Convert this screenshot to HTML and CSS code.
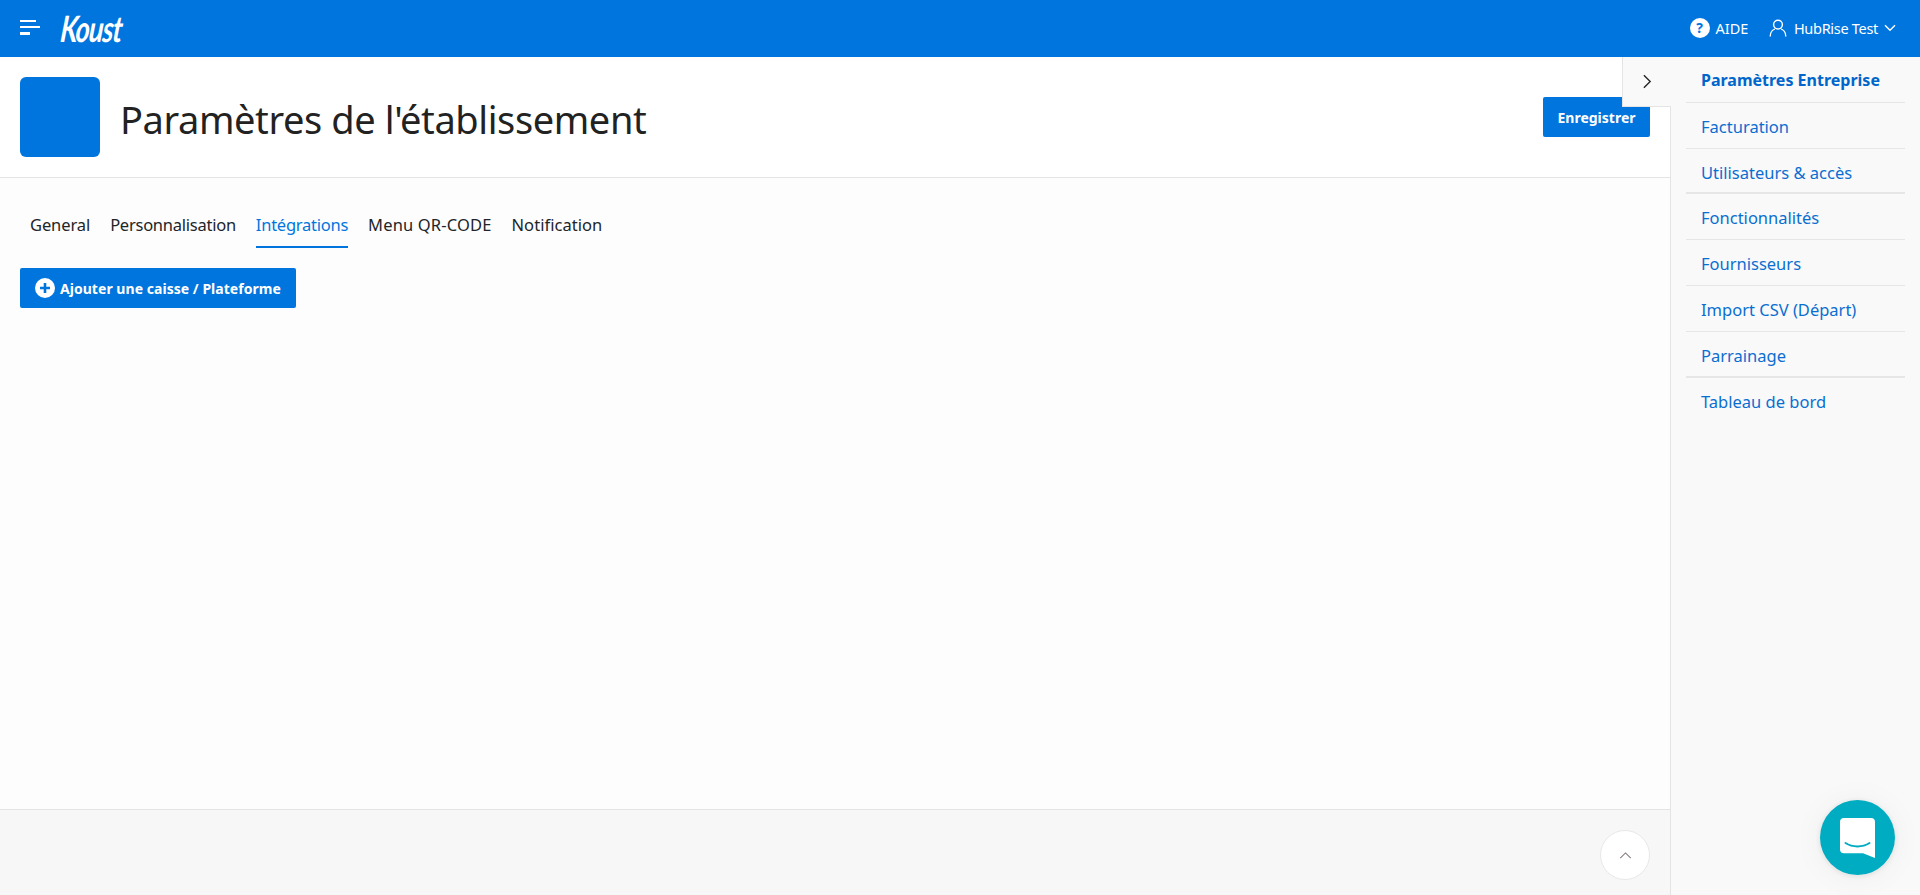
FILE: index.html
```html
<!DOCTYPE html>
<html lang="fr">
<head>
<meta charset="utf-8">
<title>Koust</title>
<link rel="stylesheet" href="styles.css">
</head>
<body>
<header class="topbar">
  <div class="topbar-left">
    <button class="burger" aria-label="Menu"><span class="b1"></span><span class="b2"></span><span class="b3"></span></button>
    <span class="logo">Koust</span>
  </div>
  <div class="topbar-right">
    <a class="help"><span class="help-icon">?</span>AIDE</a>
    <a class="user">
      <svg class="user-icon" viewBox="0 0 18 18" width="18" height="18" fill="none" stroke="#fff" stroke-width="1.4"><circle cx="9" cy="5.600" r="4.400"/><path d="M1.200 17.400c0-4 2.600-6.600 4.600-7.200M16.800 17.400c0-4-2.600-6.600-4.600-7.200"/></svg>
      <span class="user-name">HubRise Test</span>
      <svg class="chev" viewBox="0 0 12 8" width="12" height="8" fill="none" stroke="#fff" stroke-width="1.400"><path d="M1 1.200l5 5 5-5"/></svg>
    </a>
  </div>
</header>
<div class="page">
  <main class="main">
    <section class="head">
      <div class="head-left">
        <div class="avatar"></div>
        <h1>Paramètres de l'établissement</h1>
      </div>
      <button class="btn btn-save">Enregistrer</button>
    </section>
    <section class="content">
      <nav class="tabs">
        <a class="tab tab-general">General</a>
        <a class="tab">Personnalisation</a>
        <a class="tab active">Intégrations</a>
        <a class="tab tab-menu">Menu QR-CODE</a>
        <a class="tab tab-notif">Notification</a>
      </nav>
      <button class="btn btn-add">
        <svg viewBox="0 0 20 20" width="20" height="20"><circle cx="10" cy="10" r="10" fill="#fff"/><path d="M10 5v10M5 10h10" stroke="#0075de" stroke-width="2.600"/></svg>
        Ajouter une caisse / Plateforme
      </button>
    </section>
    <footer class="foot">
      <button class="to-top" aria-label="Haut">
        <svg viewBox="0 0 14 8" width="13" height="7" fill="none" stroke="#857a7a" stroke-width="1.200"><path d="M1 7l6-6 6 6"/></svg>
      </button>
    </footer>
    <button class="toggle" aria-label="Replier">
      <svg viewBox="0 0 10 16" width="9" height="15" fill="none" stroke="#222" stroke-width="1.500"><path d="M1 1l7 7-7 7"/></svg>
    </button>
  </main>
  <aside class="side">
    <a class="side-item strong">Paramètres Entreprise</a>
    <a class="side-item">Facturation</a>
    <a class="side-item thick">Utilisateurs &amp; accès</a>
    <a class="side-item">Fonctionnalités</a>
    <a class="side-item">Fournisseurs</a>
    <a class="side-item">Import CSV (Départ)</a>
    <a class="side-item thick">Parrainage</a>
    <a class="side-item last">Tableau de bord</a>
  </aside>
</div>
<button class="chat" aria-label="Chat">
  <svg viewBox="0 0 35 40" width="35" height="40"><path d="M4 0h27a4 4 0 0 1 4 4v36l-12-4.800H4a4 4 0 0 1-4-4V4a4 4 0 0 1 4-4z" fill="#fff"/><path d="M5.500 25c7 4.500 17 4.500 24 0" fill="none" stroke="#00acc1" stroke-width="2" stroke-linecap="round"/></svg>
</button>
</body>
</html>
```
FILE: styles.css
```css
* { box-sizing: border-box; }
html, body { height: 100%; }
body {
  margin: 0;
  height: 895px;
  overflow: hidden;
  display: flex;
  flex-direction: column;
  font-family: "Noto Sans", "Open Sans", sans-serif;
  color: #212529;
  background: #f9f9f9;
}
button { font-family: inherit; border: 0; padding: 0; cursor: pointer; }
.topbar {
  height: 57px;
  flex: none;
  background: #0075de;
  color: #fff;
  display: flex;
  align-items: center;
  justify-content: space-between;
  padding: 0 24px 2px 20px;
}
.topbar-left { display: flex; align-items: center; gap: 21px; }
.burger { background: none; width: 20px; display: flex; flex-direction: column; gap: 4px; }
.burger span { display: block; height: 3px; background: #fff; }
.burger .b1 { width: 16px; height: 2px; }
.burger .b2 { width: 20px; height: 2px; }
.burger .b3 { width: 10px; }
.logo {
  font-family: "Lato", sans-serif;
  font-weight: 700;
  font-style: italic;
  font-size: 29px;
  line-height: 1;
  letter-spacing: -1px;
  color: #fff;
  transform: scale(.93, 1.25) skewX(-8deg);
  transform-origin: left center;
}
.topbar-right { display: flex; align-items: center; gap: 20.500px; font-size: 14.500px; }
.help, .user { display: flex; align-items: center; }
.help-icon {
  width: 20px; height: 20px; border-radius: 50%;
  background: #fff; color: #0075de;
  font-size: 14px; font-weight: 700; line-height: 20px; text-align: center;
  margin-right: 6px;
}
.user-icon { margin-right: 7px; }
.user-name { letter-spacing: -.3px; }
.chev { margin-left: 6px; }
.page { flex: 1; display: flex; min-height: 0; }
.main {
  position: relative;
  width: 1671px;
  flex: none;
  display: flex;
  flex-direction: column;
  border-right: 1px solid #e4e4e4;
  background: #fdfdfd;
}
.head {
  height: 121px;
  flex: none;
  background: #fff;
  border-bottom: 1px solid #e4e4e4;
  display: flex;
  align-items: center;
  justify-content: space-between;
  padding: 0 20px;
}
.head-left { display: flex; align-items: center; gap: 20px; }
.avatar { width: 80px; height: 80px; border-radius: 6px; background: #0075de; }
h1 { margin: 0; padding-top: 6px; font-size: 38px; font-weight: 400; line-height: 1.2; letter-spacing: -.4px; color: #222; }
.btn {
  background: #0075de;
  color: #fff;
  font-weight: 700;
  font-size: 14px;
  height: 40px;
  border-radius: 2px;
  display: inline-flex;
  align-items: center;
}
.btn-save { width: 107px; justify-content: center; }
.content { flex: 1; padding: 26px 20px 0; }
.tabs { display: flex; gap: 0; margin-bottom: 20px; }
.tab {
  height: 44px;
  margin: 0 10px;
  font-size: 16.500px;
  letter-spacing: -.25px;
  line-height: 42px;
  white-space: nowrap;
  border-bottom: 2px solid transparent;
}
.tab-general { letter-spacing: -.1px; }
.tab-menu { letter-spacing: .15px; }
.tab-notif { letter-spacing: .05px; }
.tab.active { color: #0075de; border-bottom-color: #0075de; }
.btn-add { width: 276px; padding-left: 15px; gap: 5px; letter-spacing: .04px; }
.foot {
  height: 86px;
  flex: none;
  background: #f7f7f7;
  border-top: 1px solid #e4e4e4;
  display: flex;
  align-items: flex-start;
  justify-content: flex-end;
  padding: 20px 20px 0;
}
.to-top {
  width: 50px; height: 50px; border-radius: 50%;
  background: #fff; border: 1px solid #e8e8e8;
  display: flex; align-items: center; justify-content: center;
}
.toggle {
  position: absolute;
  top: 0; right: -1px;
  width: 49px; height: 50px;
  background: #f9f9f9;
  border-left: 1px solid #e4e4e4;
  border-bottom: 1px solid #e4e4e4;
  display: flex; align-items: center; justify-content: center;
}
.side {
  flex: 1;
  background: #f9f9f9;
  padding: 0 15px;
  display: flex;
  flex-direction: column;
}
.side-item {
  height: 45.800px;
  padding-left: 15px;
  font-size: 16.500px;
  line-height: 47px;
  color: #0a6ed1;
  border-bottom: 1px solid #e6e6e6;
  white-space: nowrap;
}
.side-item.strong { font-weight: 700; font-size: 16px; color: #0066cc; }
.side-item.thick { border-bottom-width: 2px; }
.side-item.last { border-bottom: 0; }
.chat {
  position: fixed;
  left: 1820px; top: 800px;
  width: 75px; height: 75px;
  border-radius: 50%;
  background: #00acc1;
  box-shadow: 0 1px 6px rgba(0,0,0,.1), 0 2px 32px rgba(0,0,0,.05);
  display: flex; align-items: center; justify-content: center;
}
```
